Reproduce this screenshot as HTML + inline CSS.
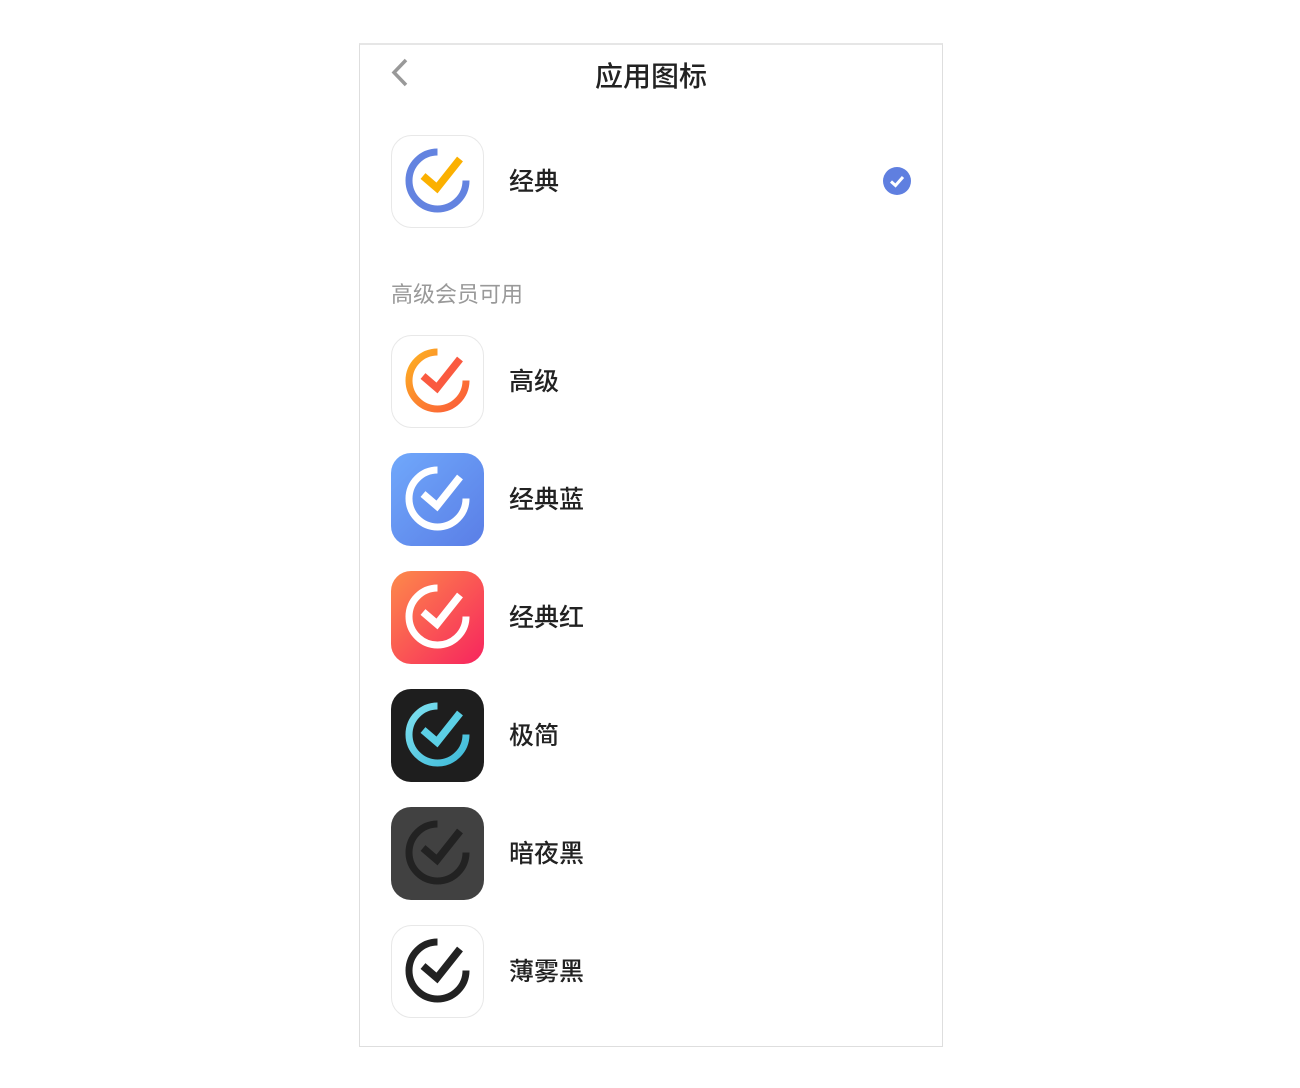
<!DOCTYPE html>
<html><head><meta charset="utf-8">
<style>
html,body{margin:0;padding:0;background:#fff;width:1300px;height:1088px;overflow:hidden}
body{font-family:"Liberation Sans","Noto Sans CJK SC",sans-serif;position:relative}
.frame{position:absolute;left:359px;top:43px;width:582px;height:1001px;border:1px solid #dedede;border-top:2px solid #e6e6e6}
.title{position:absolute;left:0;width:1302px;top:59px;text-align:center;font-size:28px;color:#222;font-weight:500;line-height:36px}
.back{position:absolute;left:388px;top:57px}
.icon{position:absolute;left:391px;width:93px;height:93px}
.lbl{position:absolute;left:509px;font-size:25px;color:#222;font-weight:500;line-height:30px}
.sec{position:absolute;left:391px;top:280px;font-size:22px;color:#999;line-height:30px}
</style></head><body>
<div class="frame"></div>
<svg class="back" width="24" height="32" viewBox="0 0 24 32"><path d="M18 3 L6 15.5 L18 28" fill="none" stroke="#999" stroke-width="3.5"/></svg>
<div class="title">应用图标</div>

<svg class="icon" style="top:135px" viewBox="0 0 93 93">
<rect x="0.5" y="0.5" width="92" height="92" rx="20" fill="#fff" stroke="#e8e8e8"/>
<path d="M46.5 17 A28.5 28.5 0 1 0 75 45.5" fill="none" stroke="#6383e0" stroke-width="7"/>
<path d="M32 41 L46 53 L69 24" fill="none" stroke="#fbb000" stroke-width="7.5"/>
</svg>
<div class="lbl" style="top:167px">经典</div>
<svg style="position:absolute;left:882px;top:166px" width="30" height="30" viewBox="0 0 30 30"><circle cx="15" cy="15" r="14" fill="#5f7fe0"/><path d="M9 15.5 L13.5 19.5 L21 11" fill="none" stroke="#fff" stroke-width="3"/></svg>

<div class="sec">高级会员可用</div>

<svg class="icon" style="top:335px" viewBox="0 0 93 93">
<defs><linearGradient id="go" x1="0" y1="0" x2="1" y2="1"><stop offset="0" stop-color="#fdb022"/><stop offset="1" stop-color="#fb5a3a"/></linearGradient></defs>
<rect x="0.5" y="0.5" width="92" height="92" rx="20" fill="#fff" stroke="#e8e8e8"/>
<path d="M46.5 17 A28.5 28.5 0 1 0 75 45.5" fill="none" stroke="url(#go)" stroke-width="7"/>
<path d="M32 41 L46 53 L69 24" fill="none" stroke="#fa5a40" stroke-width="7.5"/>
</svg>
<div class="lbl" style="top:367px">高级</div>

<svg class="icon" style="top:453px" viewBox="0 0 93 93">
<defs><linearGradient id="gb" x1="0" y1="0" x2="1" y2="1"><stop offset="0" stop-color="#70a8fb"/><stop offset="1" stop-color="#5a7ee6"/></linearGradient></defs>
<rect width="93" height="93" rx="20" fill="url(#gb)"/>
<path d="M46.5 17 A28.5 28.5 0 1 0 75 45.5" fill="none" stroke="#fff" stroke-width="7"/>
<path d="M32 41 L46 53 L69 24" fill="none" stroke="#fff" stroke-width="7.5"/>
</svg>
<div class="lbl" style="top:485px">经典蓝</div>

<svg class="icon" style="top:571px" viewBox="0 0 93 93">
<defs><linearGradient id="gr" x1="0" y1="0" x2="1" y2="1"><stop offset="0" stop-color="#fd8a4a"/><stop offset="1" stop-color="#f7245e"/></linearGradient></defs>
<rect width="93" height="93" rx="20" fill="url(#gr)"/>
<path d="M46.5 17 A28.5 28.5 0 1 0 75 45.5" fill="none" stroke="#fff" stroke-width="7"/>
<path d="M32 41 L46 53 L69 24" fill="none" stroke="#fff" stroke-width="7.5"/>
</svg>
<div class="lbl" style="top:603px">经典红</div>

<svg class="icon" style="top:689px" viewBox="0 0 93 93">
<defs><linearGradient id="gc" x1="0" y1="0" x2="1" y2="1"><stop offset="0" stop-color="#7ee0f0"/><stop offset="1" stop-color="#3ebad8"/></linearGradient></defs>
<rect width="93" height="93" rx="20" fill="#1e1e1e"/>
<path d="M46.5 17 A28.5 28.5 0 1 0 75 45.5" fill="none" stroke="url(#gc)" stroke-width="7"/>
<path d="M32 41 L46 53 L69 24" fill="none" stroke="#5cd0e6" stroke-width="7.5"/>
</svg>
<div class="lbl" style="top:721px">极简</div>

<svg class="icon" style="top:807px" viewBox="0 0 93 93">
<rect width="93" height="93" rx="20" fill="#414141"/>
<path d="M46.5 17 A28.5 28.5 0 1 0 75 45.5" fill="none" stroke="#222" stroke-width="7"/>
<path d="M32 41 L46 53 L69 24" fill="none" stroke="#222" stroke-width="7.5"/>
</svg>
<div class="lbl" style="top:839px">暗夜黑</div>

<svg class="icon" style="top:925px" viewBox="0 0 93 93">
<rect x="0.5" y="0.5" width="92" height="92" rx="20" fill="#fff" stroke="#e8e8e8"/>
<path d="M46.5 17 A28.5 28.5 0 1 0 75 45.5" fill="none" stroke="#222" stroke-width="7"/>
<path d="M32 41 L46 53 L69 24" fill="none" stroke="#222" stroke-width="7.5"/>
</svg>
<div class="lbl" style="top:957px">薄雾黑</div>
</body></html>
